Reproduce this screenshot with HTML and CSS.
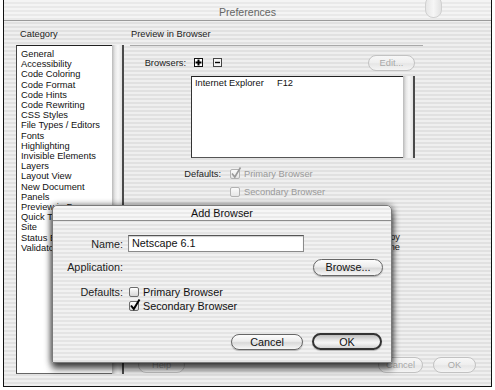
FILE: index.html
```html
<!doctype html>
<html>
<head>
    <title>Preferences</title>
<link rel="stylesheet" href="styles.css">
</head>
<body>
<div class="window">
    <div class="titlebar">
        <span class="title">Preferences</span>
        <span class="toolbar-pill"></span>
    </div>
    <div class="content">
        <div class="left-column">
            <p class="pane-label">Category</p>
            <div class="list-wrap">
                <ul class="category-list">
                    <li>General</li>
                    <li>Accessibility</li>
                    <li>Code Coloring</li>
                    <li>Code Format</li>
                    <li>Code Hints</li>
                    <li>Code Rewriting</li>
                    <li>CSS Styles</li>
                    <li>File Types / Editors</li>
                    <li>Fonts</li>
                    <li>Highlighting</li>
                    <li>Invisible Elements</li>
                    <li>Layers</li>
                    <li>Layout View</li>
                    <li>New Document</li>
                    <li>Panels</li>
                    <li>Preview in Browser</li>
                    <li>Quick Tag Editor</li>
                    <li>Site</li>
                    <li>Status Bar</li>
                    <li>Validator</li>
                </ul>
                <div class="scroll-track"></div>
            </div>
        </div>
        <div class="right-column">
            <p class="pane-label heading">Preview in Browser</p>
            <div class="rule"></div>
            <div class="browsers-row">
                <span class="browsers-label">Browsers:</span>
                <svg class="mini-btn plus" width="9" height="9" viewBox="0 0 9 9"><rect x="0.5" y="0.5" width="8" height="8" fill="#fff" stroke="#111"/><path d="M4.5 1.5v6M1.5 4.5h6" stroke="#000" stroke-width="2"/></svg>
                <svg class="mini-btn" width="9" height="9" viewBox="0 0 9 9"><rect x="0.5" y="0.5" width="8" height="8" fill="#f4f4f4" stroke="#444"/><path d="M2 4.5h5" stroke="#000" stroke-width="1.4"/></svg>
                <span class="pill faded edit">Edit...</span>
            </div>
            <div class="browser-list">
                <div class="browser-box"><span class="browser-name">Internet Explorer</span><span>F12</span></div>
                <div class="scroll-track"></div>
            </div>
            <div class="check-row">
                <span class="defaults-label">Defaults:</span>
                <span class="checkbox disabled"><svg width="12" height="12" viewBox="0 0 12 12"><path d="M2 6.5 L4.8 10 L10.5 0.5" fill="none" stroke="#9a9a9a" stroke-width="1.6"/></svg></span>
                <span class="check-text">Primary Browser</span>
            </div>
            <div class="check-row second">
                <span class="checkbox disabled"></span>
                <span class="check-text">Secondary Browser</span>
            </div>
            <p class="note">Preview using a temporary copy<br>of the document on this machine</p>
            <div class="bottom-row">
                <span class="pill faded help">Help</span>
                <span class="pill faded cancel">Cancel</span>
                <span class="pill faded ok">OK</span>
            </div>
        </div>
    </div>

    <div class="sheet">
        <div class="sheet-title">Add Browser</div>
        <div class="sheet-body">
            <div class="form-row name-row">
                <span class="form-label">Name:</span>
                <span class="text-input">Netscape 6.1</span>
            </div>
            <div class="form-row app-row">
                <span class="form-label">Application:</span>
                <span class="pill browse">Browse...</span>
            </div>
            <div class="form-row check-line">
                <span class="form-label">Defaults:</span>
                <span class="checkbox"></span>
                <span>Primary Browser</span>
            </div>
            <div class="form-row check-line indent">
                <span class="checkbox"><svg width="12" height="12" viewBox="0 0 12 12"><path d="M2 6.5 L4.8 10 L10.5 0.5" fill="none" stroke="#000" stroke-width="2"/></svg></span>
                <span>Secondary Browser</span>
            </div>
            <div class="sheet-buttons">
                <span class="pill cancel-btn">Cancel</span>
                <span class="pill default-btn">OK</span>
            </div>
        </div>
    </div>
</div>
</body>
</html>
```

FILE: styles.css
```css
    body {
        margin: 0;
        background: #fff;
        font-family: "Liberation Sans", Arial, sans-serif;
        font-size: 9.3px;
        color: #111;
    }
    p {
        margin: 0;
    }
    .window {
        position: relative;
        margin-left: 3px;
        width: 487px;
        height: 386px;
        border: 1px solid #111;
        border-top: none;
        background: repeating-linear-gradient(#efefef 0 2px, #e1e1e1 2px 4px);
    }
    .titlebar {
        position: relative;
        height: 21px;
        border-bottom: 1px solid #9a9a9a;
        background: repeating-linear-gradient(#f4f4f4 0 2px, #e9e9e9 2px 4px);
        display: flex;
        justify-content: center;
        align-items: center;
        padding-top: 3px;
        box-sizing: border-box;
    }
    .title {
        font-size: 10.6px;
        color: #666;
    }
    .toolbar-pill {
        position: absolute;
        left: 421px;
        top: -4px;
        width: 15px;
        height: 20px;
        border: 1px solid #d0d0d0;
        border-radius: 8px;
        background: linear-gradient(to right, #e6e6e6, #f6f6f6, #e2e2e2);
    }
    .content {
        display: flex;
        height: 364px;
    }

    /* category column */
    .left-column {
        margin-left: 12px;
        width: 108px;
        display: flex;
        flex-direction: column;
        padding-bottom: 11px;
    }
    .pane-label {
        margin-top: 8px;
        line-height: 10px;
        padding-left: 4px;
        color: #222;
    }
    .list-wrap {
        margin-top: 6px;
        flex: 1;
        display: flex;
    }
    .category-list {
        flex: 1;
        list-style: none;
        margin: 0;
        padding: 3px 0 0 4px;
        background: #fff;
        border-top: 1px solid #222;
        border-left: 1px solid #444;
        border-bottom: 1px solid #666;
        line-height: 10.2px;
        overflow: hidden;
        white-space: nowrap;
    }
    .scroll-track {
        width: 12px;
        box-sizing: border-box;
        border-right: 2px solid #4a4a4a;
        background: linear-gradient(to right, #b9b9b9 0, #e6e6e6 3px, #f7f7f7 6px, #e2e2e2 10px);
    }

    /* preview pane */
    .right-column {
        flex: 1;
        display: flex;
        flex-direction: column;
        padding: 0 0 12px 6px;
    }
    .heading {
        padding-left: 1px;
    }
    .rule {
        margin-top: 6px;
        width: 293px;
        height: 1px;
        background: #a8a8a8;
    }
    .browsers-row {
        margin-top: 8px;
        width: 285px;
        height: 17px;
        display: flex;
        align-items: center;
    }
    .browsers-label {
        width: 56px;
        text-align: right;
        margin-right: 8px;
        color: #222;
    }
    .mini-btn.plus {
        margin-right: 10px;
    }
    .edit {
        margin-left: auto;
        width: 47px;
        height: 17px;
    }
    .browser-list {
        margin: 5px 0 0 61px;
        width: 224px;
        height: 82px;
        display: flex;
    }
    .browser-box {
        flex: 1;
        background: #fff;
        border-top: 1px solid #222;
        border-left: 1px solid #333;
        border-bottom: 1px solid #555;
        padding: 1px 0 0 3px;
        line-height: 10px;
        white-space: nowrap;
    }
    .browser-name {
        display: inline-block;
        width: 82px;
    }
    .check-row {
        display: flex;
        align-items: center;
        height: 12px;
        margin-top: 10px;
    }
    .check-row.second {
        margin-top: 6px;
        padding-left: 100px;
    }
    .defaults-label {
        width: 91px;
        text-align: right;
        margin-right: 9px;
        color: #222;
    }
    .check-text {
        color: #9a9a9a;
    }
    .note {
        margin-top: 34px;
        width: 270px;
        text-align: right;
        line-height: 10px;
        color: #222;
    }
    .bottom-row {
        margin-top: auto;
        display: flex;
        height: 16px;
        margin-right: 15px;
    }
    .help {
        margin-left: 8px;
        width: 47px;
    }
    .cancel {
        margin-left: auto;
        width: 45px;
    }
    .ok {
        margin-left: 10px;
        width: 43px;
    }

    /* aqua bits */
    .pill {
        display: inline-flex;
        align-items: center;
        justify-content: center;
        box-sizing: border-box;
        height: 16px;
        border: 1px solid #666;
        border-radius: 9px;
        background: linear-gradient(#fdfdfd, #ececec 45%, #d9d9d9 55%, #f7f7f7);
        box-shadow: 0 1px 1px rgba(0, 0, 0, 0.25);
        color: #111;
    }
    .pill.faded {
        border-color: #c2c2c2;
        background: linear-gradient(#f7f7f7, #eeeeee 50%, #e6e6e6 55%, #f4f4f4);
        box-shadow: none;
        color: #a8a8a8;
    }
    .checkbox {
        position: relative;
        display: inline-block;
        width: 10px;
        height: 10px;
        box-sizing: border-box;
        border: 1px solid #6c6c6c;
        border-radius: 2px;
        background: linear-gradient(#fff, #d6d6d6);
        margin-right: 4px;
    }
    .checkbox.disabled {
        border-color: #b2b2b2;
        background: linear-gradient(#fbfbfb, #e6e6e6);
    }
    .checkbox svg {
        position: absolute;
        left: -1px;
        top: -3px;
    }

    /* add browser sheet */
    .sheet {
        position: absolute;
        left: 48px;
        top: 205px;
        width: 338px;
        border: 1px solid #7a7a7a;
        border-radius: 5px 5px 0 0;
        background: repeating-linear-gradient(#f1f1f1 0 2px, #e4e4e4 2px 4px);
        box-shadow: 0 6px 7px rgba(0, 0, 0, 0.65), -2px 0 6px rgba(0, 0, 0, 0.3), 2px 0 6px rgba(0, 0, 0, 0.3);
        font-size: 10.8px;
    }
    .sheet-title {
        height: 14px;
        line-height: 14px;
        text-align: center;
        border-bottom: 1px solid #8c8c8c;
        color: #111;
        border-radius: 5px 5px 0 0;
        background: repeating-linear-gradient(#f6f6f6 0 2px, #eaeaea 2px 4px);
    }
    .sheet-body {
        padding: 0 9px 12px 0;
    }
    .form-row {
        display: flex;
        align-items: center;
    }
    .form-label {
        width: 70px;
        text-align: right;
        margin-right: 5px;
        color: #222;
    }
    .name-row {
        margin-top: 14px;
        height: 17px;
    }
    .text-input {
        width: 176px;
        height: 17px;
        box-sizing: border-box;
        border: 1px solid #8a8a8a;
        border-top-color: #555;
        background: #fff;
        padding-left: 3px;
        line-height: 15px;
        box-shadow: inset 0 1px 1px rgba(0, 0, 0, 0.2);
        color: #111;
    }
    .app-row {
        margin-top: 7px;
        height: 16px;
    }
    .browse {
        margin-left: auto;
        margin-right: -1px;
        width: 70px;
        height: 17px;
    }
    .check-line {
        margin-top: 10px;
        height: 14px;
    }
    .check-line .checkbox {
        margin-left: 1px;
    }
    .check-line.indent {
        margin-top: 0;
        padding-left: 75px;
    }
    .sheet-buttons {
        margin-top: 20px;
        display: flex;
        justify-content: flex-end;
        align-items: flex-end;
        gap: 9px;
        height: 17px;
    }
    .cancel-btn {
        width: 72px;
    }
    .default-btn {
        width: 70px;
        height: 17px;
        border: 2px solid #333;
        background: linear-gradient(#bdbdbd, #e8e8e8 40%, #f6f6f6 60%, #d4d4d4);
    }
```
